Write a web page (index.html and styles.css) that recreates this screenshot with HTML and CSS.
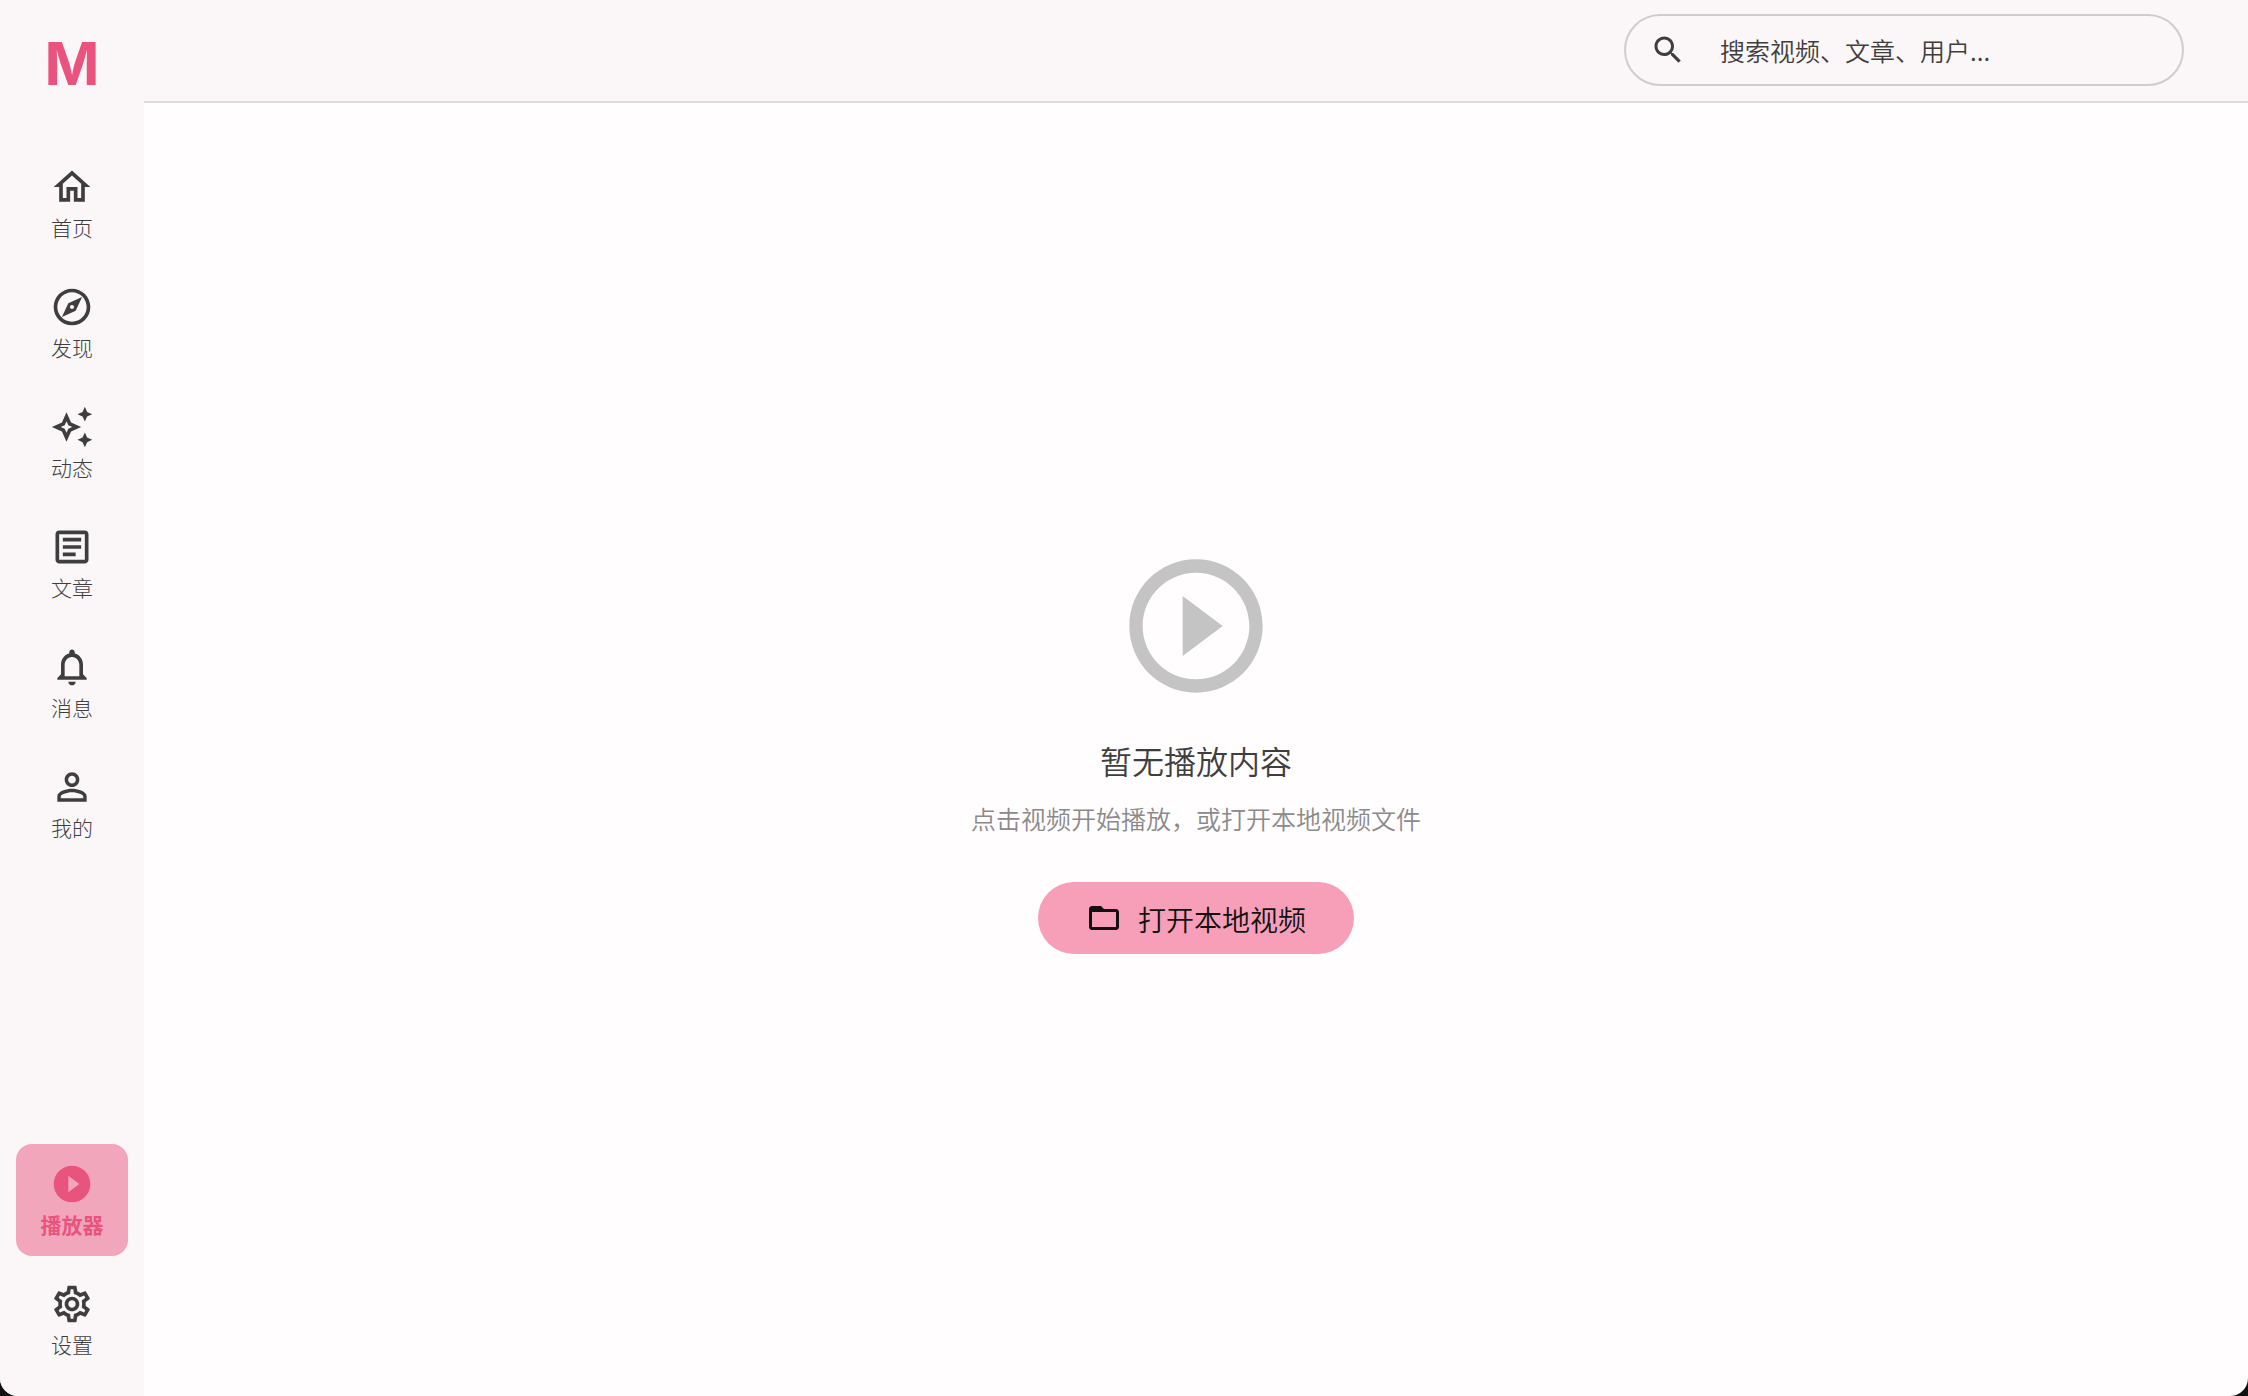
FILE: index.html
```html
<!DOCTYPE html>
<html lang="zh-CN">
<head>
<meta charset="utf-8">
<meta name="viewport" content="width=device-width, initial-scale=1">
<title>播放器</title>
<link rel="stylesheet" href="styles.css">
</head>
<body>
<div class="app">
  <aside class="sidebar">
    <div class="logo">M</div>
    <nav class="nav">
      <a class="nav-item" href="#home">
        <svg class="nav-icon" viewBox="0 0 24 24" aria-hidden="true"><path d="M12 5.69l5 4.5V18h-2v-6H9v6H7v-7.81l5-4.5M12 3L2 12h3v8h6v-6h2v6h6v-8h3L12 3z"/></svg>
        <span class="nav-label">首页</span>
      </a>
      <a class="nav-item" href="#explore">
        <svg class="nav-icon" viewBox="0 0 24 24" aria-hidden="true"><path fill-rule="evenodd" d="M12 2C6.48 2 2 6.48 2 12s4.48 10 10 10 10-4.48 10-10S17.52 2 12 2zm0 18c-4.41 0-8-3.59-8-8s3.59-8 8-8 8 3.59 8 8-3.59 8-8 8zm-5.5-2.5l7.51-3.49L17.5 6.5 9.99 9.99 6.5 17.5zm5.5-6.6c.61 0 1.1.49 1.1 1.1s-.49 1.1-1.1 1.1-1.1-.49-1.1-1.1.49-1.1 1.1-1.1z"/></svg>
        <span class="nav-label">发现</span>
      </a>
      <a class="nav-item" href="#feed">
        <svg class="nav-icon" viewBox="0 0 24 24" aria-hidden="true"><path fill-rule="evenodd" d="M19 9l1.25-2.75L23 5l-2.75-1.25L19 1l-1.25 2.75L15 5l2.75 1.25zM19 15l-1.25 2.75L15 19l2.75 1.25L19 23l1.25-2.75L23 19l-2.75-1.25zM11.5 9.5L9 4 6.5 9.5 1 12l5.5 2.5L9 20l2.5-5.5L17 12l-5.5-2.5zm-1.51 3.49L9 15.17l-.99-2.18L5.83 12l2.18-.99L9 8.83l.99 2.18 2.18.99-2.18.99z"/></svg>
        <span class="nav-label">动态</span>
      </a>
      <a class="nav-item" href="#articles">
        <svg class="nav-icon" viewBox="0 0 24 24" aria-hidden="true"><path fill-rule="evenodd" d="M19 5v14H5V5h14m0-2H5c-1.100 0-2 .9-2 2v14c0 1.100.9 2 2 2h14c1.100 0 2-.9 2-2V5c0-1.100-.9-2-2-2z"/><path d="M14 17H7v-2h7v2zm3-4H7v-2h10v2zm0-4H7V7h10v2z"/></svg>
        <span class="nav-label">文章</span>
      </a>
      <a class="nav-item" href="#messages">
        <svg class="nav-icon" viewBox="0 0 24 24" aria-hidden="true"><path fill-rule="evenodd" d="M12 22c1.100 0 2-.9 2-2h-4c0 1.100.9 2 2 2zm6-6v-5c0-3.070-1.630-5.640-4.500-6.320V4c0-.83-.67-1.500-1.500-1.500s-1.500.67-1.500 1.500v.68C7.640 5.360 6 7.920 6 11v5l-2 2v1h16v-1l-2-2zm-2 1H8v-6c0-2.480 1.510-4.500 4-4.500s4 2.020 4 4.500v6z"/></svg>
        <span class="nav-label">消息</span>
      </a>
      <a class="nav-item" href="#me">
        <svg class="nav-icon" viewBox="0 0 24 24" aria-hidden="true"><path fill-rule="evenodd" d="M12 5.900c1.160 0 2.100.94 2.100 2.100s-.94 2.100-2.100 2.100S9.900 9.160 9.900 8s.94-2.100 2.100-2.100m0 9c2.970 0 6.100 1.460 6.100 2.100v1.100H5.900V17c0-.64 3.130-2.100 6.100-2.100M12 4C9.790 4 8 5.790 8 8s1.790 4 4 4 4-1.790 4-4-1.790-4-4-4zm0 9c-2.670 0-8 1.340-8 4v3h16v-3c0-2.660-5.330-4-8-4z"/></svg>
        <span class="nav-label">我的</span>
      </a>
    </nav>
    <nav class="nav nav-bottom">
      <a class="nav-item active" href="#player" aria-current="page">
        <svg class="nav-icon" viewBox="0 0 24 24" aria-hidden="true"><path d="M12 2C6.480 2 2 6.480 2 12s4.480 10 10 10 10-4.480 10-10S17.520 2 12 2zm-2 14.500v-9l6 4.500-6 4.500z"/></svg>
        <span class="nav-label">播放器</span>
      </a>
      <a class="nav-item" href="#settings">
        <svg class="nav-icon" viewBox="0 0 24 24" aria-hidden="true"><path fill-rule="evenodd" d="M19.43 12.98c.04-.32.07-.64.07-.98 0-.34-.03-.66-.07-.98l2.11-1.65c.19-.15.24-.42.12-.64l-2-3.46c-.09-.16-.26-.25-.44-.25-.06 0-.12.01-.17.03l-2.49 1c-.52-.4-1.08-.73-1.69-.98l-.38-2.65C14.46 2.18 14.25 2 14 2h-4c-.25 0-.46.18-.49.42l-.38 2.65c-.61.25-1.17.59-1.69.98l-2.49-1c-.06-.02-.12-.03-.18-.03-.17 0-.34.09-.43.25l-2 3.46c-.13.22-.07.49.12.64l2.11 1.65c-.04.32-.07.65-.07.98 0 .33.03.66.07.98l-2.11 1.65c-.19.15-.24.42-.12.64l2 3.46c.09.16.26.25.44.25.06 0 .12-.01.17-.03l2.49-1c.52.4 1.08.73 1.69.98l.38 2.65c.03.24.24.42.49.42h4c.25 0 .46-.18.49-.42l.38-2.65c.61-.25 1.17-.59 1.69-.98l2.49 1c.06.02.12.03.18.03.17 0 .34-.09.43-.25l2-3.46c.12-.22.07-.49-.12-.64l-2.11-1.65zm-1.98-1.71c.04.31.05.52.05.73 0 .21-.02.43-.05.73l-.14 1.13.89.7 1.08.84-.7 1.21-1.27-.51-1.04-.42-.9.68c-.43.32-.84.56-1.25.73l-1.06.43-.16 1.13-.2 1.35h-1.4l-.19-1.35-.16-1.13-1.06-.43c-.43-.18-.83-.41-1.23-.71l-.91-.7-1.06.43-1.27.51-.7-1.21 1.08-.84.89-.7-.14-1.13c-.03-.31-.05-.54-.05-.74s.02-.43.05-.73l.14-1.13-.89-.7-1.08-.84.7-1.21 1.27.51 1.04.42.9-.68c.43-.32.84-.56 1.25-.73l1.06-.43.16-1.13.2-1.35h1.39l.19 1.35.16 1.13 1.06.43c.43.18.83.41 1.23.71l.91.7 1.06-.43 1.27-.51.7 1.21-1.07.85-.89.7.14 1.13zM12 8c-2.210 0-4 1.790-4 4s1.790 4 4 4 4-1.790 4-4-1.790-4-4-4zm0 6c-1.100 0-2-.9-2-2s.9-2 2-2 2 .9 2 2-.9 2-2 2z"/></svg>
        <span class="nav-label">设置</span>
      </a>
    </nav>
  </aside>
  <div class="content">
    <header class="topbar">
      <label class="search">
        <svg class="search-icon" viewBox="0 0 24 24" aria-hidden="true"><path d="M15.500 14h-.79l-.28-.27C15.410 12.590 16 11.110 16 9.500 16 5.910 13.090 3 9.500 3S3 5.910 3 9.500 5.910 16 9.500 16c1.610 0 3.090-.59 4.230-1.570l.27.28v.79l5 4.990L20.490 19l-4.990-5zm-6 0C7.010 14 5 11.990 5 9.500S7.010 5 9.500 5 14 7.010 14 9.500 11.990 14 9.500 14z"/></svg>
        <input class="search-input" type="text" placeholder="搜索视频、文章、用户..." aria-label="搜索">
      </label>
    </header>
    <main class="player-empty">
      <svg class="empty-icon" viewBox="0 0 24 24" aria-hidden="true"><path d="M12 2C6.480 2 2 6.480 2 12s4.480 10 10 10 10-4.480 10-10S17.520 2 12 2zm0 18c-4.410 0-8-3.590-8-8s3.590-8 8-8 8 3.590 8 8-3.590 8-8 8zm-2-3.500l6-4.500-6-4.500v9z"/></svg>
      <h1 class="empty-title">暂无播放内容</h1>
      <p class="empty-hint">点击视频开始播放，或打开本地视频文件</p>
      <button class="open-button" type="button">
        <svg class="button-icon" viewBox="0 0 24 24" aria-hidden="true"><path fill-rule="evenodd" d="M20 6h-8l-2-2H4c-1.100 0-1.990.9-1.990 2L2 18c0 1.100.9 2 2 2h16c1.100 0 2-.9 2-2V8c0-1.100-.9-2-2-2zm0 12H4V8h16v10z"/></svg>
        <span class="button-label">打开本地视频</span>
      </button>
    </main>
  </div>
</div>
</body>
</html>
```
FILE: styles.css
```css
* {
  box-sizing: border-box;
}

:root {
  --surface: #fbf7f8;
  --page: #fffdfe;
  --ink: #3f3e3f;
  --accent: #e9547f;
}

body {
  margin: 0;
  background: #111;
  color: var(--ink);
  font-family: "Noto Sans CJK SC", sans-serif;
  font-weight: 350;
}

svg {
  display: block;
  flex: none;
  fill: currentColor;
}

.app {
  display: flex;
  min-height: 100vh;
  border-radius: 0 0 18px 18px;
  overflow: hidden;
  background: var(--page);
}

.sidebar {
  display: flex;
  flex-direction: column;
  flex: none;
  width: 144px;
  padding: 24px 16px 20px;
  background: var(--surface);
}

.logo {
  height: 80px;
  margin-bottom: 43px;
  color: var(--accent);
  font-family: Inter, sans-serif;
  font-size: 59px;
  font-weight: 700;
  line-height: 80px;
  text-align: center;
}

.nav {
  display: flex;
  flex-direction: column;
  gap: 8px;
}

.nav-bottom {
  margin-top: auto;
}

.nav-item {
  display: flex;
  flex-direction: column;
  align-items: center;
  gap: 4px;
  height: 112px;
  padding-top: 18px;
  border-radius: 16px;
  color: inherit;
  font-weight: 300;
  text-decoration: none;
}

.nav-item.active {
  background: #f2a6bb;
  color: var(--accent);
  font-weight: 700;
}

.nav-icon {
  width: 44px;
  height: 44px;
}

.nav-label {
  font-size: 21px;
  line-height: 28px;
}

.content {
  display: flex;
  flex: 1;
  flex-direction: column;
  min-width: 0;
}

.topbar {
  display: flex;
  justify-content: flex-end;
  padding: 14px 64px 15px;
  border-bottom: 2px solid #dbd9da;
  background: var(--surface);
}

.search {
  display: flex;
  align-items: center;
  gap: 34px;
  width: 560px;
  height: 72px;
  padding: 0 24px;
  border: 2px solid #d0cccd;
  border-radius: 36px;
}

.search-icon {
  width: 36px;
  height: 36px;
}

.search-input {
  flex: 1;
  min-width: 0;
  padding: 0;
  border: 0;
  outline: 0;
  background: transparent;
  color: inherit;
  font: inherit;
  font-size: 25px;
  line-height: 36px;
}

.search-input::placeholder {
  color: inherit;
  opacity: 1;
}

.player-empty {
  display: flex;
  flex: 1;
  flex-direction: column;
  align-items: center;
  justify-content: center;
}

.empty-icon {
  width: 160px;
  height: 160px;
  color: #c4c4c4;
}

.empty-title {
  margin: 30px 0 16px;
  font-size: 32px;
  font-weight: inherit;
  line-height: 48px;
}

.empty-hint {
  margin: 0 0 46px;
  color: #8b8a8b;
  font-size: 25px;
  line-height: 36px;
}

.open-button {
  display: flex;
  align-items: center;
  gap: 16px;
  height: 72px;
  padding: 0 48px;
  border: 0;
  border-radius: 36px;
  background: #f79fb9;
  color: #111;
  font: inherit;
  font-size: 28px;
  line-height: 40px;
}

.button-icon {
  width: 36px;
  height: 36px;
}

.button-label {
  padding-top: 2px;
}
```
